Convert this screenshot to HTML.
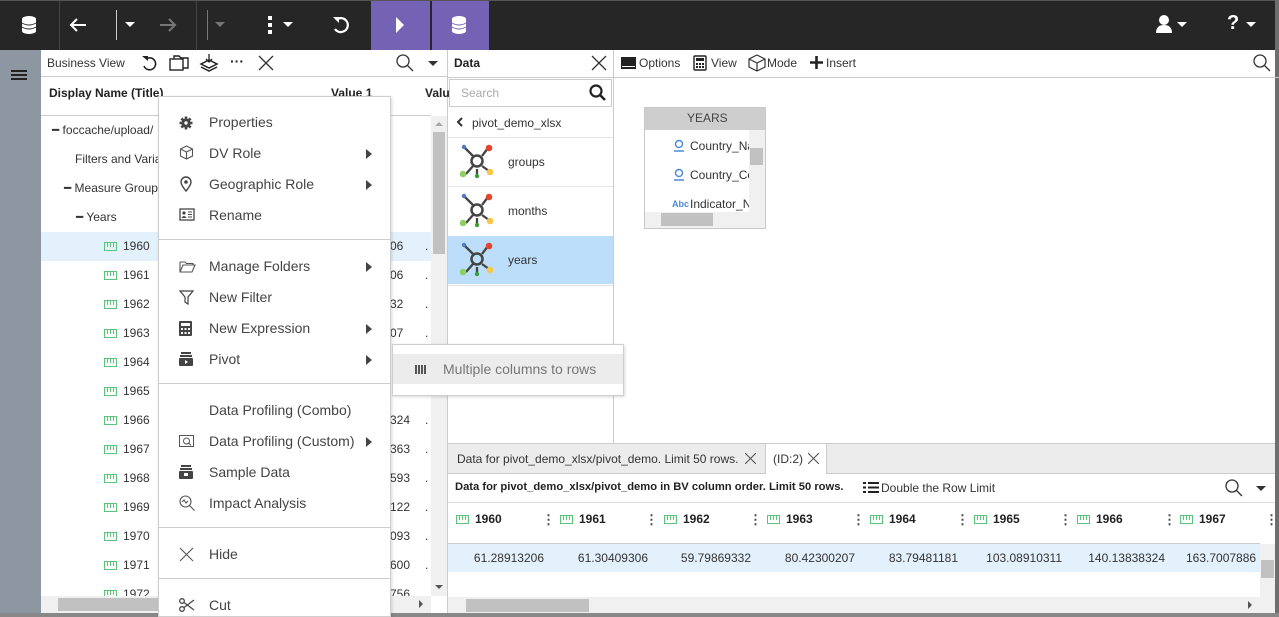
<!DOCTYPE html>
<html><head><meta charset="utf-8"><style>
*{box-sizing:border-box;margin:0;padding:0}
body{width:1279px;height:617px;overflow:hidden;background:#fff;font-family:"Liberation Sans",sans-serif;color:#333;position:relative;font-size:12px}
.a{position:absolute}
.t{position:absolute;white-space:nowrap}
.top{left:0;top:0;width:1279px;height:50px;background:#262626;border-top:1px solid #555}
.vs{position:absolute;top:1px;width:1px;height:49px;background:#444}
.mi{position:absolute;left:50px;font-size:14px;color:#444;white-space:nowrap}
.ic{position:absolute;left:20px}
.arr{position:absolute;left:207px;width:0;height:0;border-top:5px solid transparent;border-bottom:5px solid transparent;border-left:6px solid #444}
.sep{position:absolute;left:0;width:232px;height:1px;background:#ccc}
.tr{position:absolute;font-size:12px;color:#333;white-space:nowrap}
.meas{display:inline-block;width:13px;height:9px;border:1.5px solid #5cc47a;vertical-align:middle;margin-right:6px;background:repeating-linear-gradient(90deg,transparent 0 2px,#5cc47a 2px 3px) top/100% 4px no-repeat}
.gh{position:absolute;top:512px;font-weight:bold;font-size:12px;color:#222}
.gv{position:absolute;top:551px;font-size:12px;color:#333;text-align:right;width:90px}
.kb{position:absolute;top:512px;font-size:13px;color:#444;font-weight:bold}
</style></head><body>
<!-- top bar -->
<div class="a top"></div>
<div class="vs" style="left:59px"></div>
<div class="vs" style="left:196px"></div>
<div class="vs" style="left:400px"></div>
<div class="a" style="left:371px;top:1px;width:59px;height:49px;background:#7462b4"></div>
<div class="a" style="left:432px;top:1px;width:57px;height:49px;background:#7462b4"></div>
<svg class="a" style="left:20px;top:15px" width="18" height="20" viewBox="0 0 18 20"><ellipse cx="9" cy="4" rx="7" ry="3" fill="#fff"/><rect x="2" y="4" width="14" height="12" fill="#fff"/><ellipse cx="9" cy="16" rx="7" ry="3" fill="#fff"/><path d="M2 8q7 4 14 0M2 12q7 4 14 0" stroke="#262626" fill="none"/></svg>
<svg class="a" style="left:450px;top:15px" width="18" height="20" viewBox="0 0 18 20"><ellipse cx="9" cy="4" rx="7" ry="3" fill="#fff"/><rect x="2" y="4" width="14" height="12" fill="#fff"/><ellipse cx="9" cy="16" rx="7" ry="3" fill="#fff"/><path d="M2 8q7 4 14 0M2 12q7 4 14 0" stroke="#7462b4" fill="none"/></svg>
<svg class="a" style="left:69px;top:17px" width="18" height="16"><path d="M17 8H2M8 2L2 8l6 6" stroke="#fff" stroke-width="2" fill="none"/></svg>
<div class="a" style="left:116px;top:10px;width:1px;height:30px;background:#ccc"></div>
<div class="a" style="left:125px;top:22px;border-left:5px solid transparent;border-right:5px solid transparent;border-top:5px solid #fff"></div>
<svg class="a" style="left:159px;top:17px" width="18" height="16"><path d="M1 8h15M10 2l6 6-6 6" stroke="#777" stroke-width="2" fill="none"/></svg>
<div class="a" style="left:207px;top:10px;width:1px;height:30px;background:#777"></div>
<div class="a" style="left:215px;top:22px;border-left:5px solid transparent;border-right:5px solid transparent;border-top:5px solid #777"></div>
<div class="a" style="left:268px;top:16px;width:4px;height:4px;background:#fff"></div>
<div class="a" style="left:268px;top:23px;width:4px;height:4px;background:#fff"></div>
<div class="a" style="left:268px;top:30px;width:4px;height:4px;background:#fff"></div>
<div class="a" style="left:283px;top:22px;border-left:5px solid transparent;border-right:5px solid transparent;border-top:5px solid #fff"></div>
<svg class="a" style="left:331px;top:15px" width="20" height="20"><path d="M5 5A7 7 0 1 1 4 14" stroke="#fff" stroke-width="2.2" fill="none"/><path d="M2 2h6v6z" fill="#fff"/></svg>
<svg class="a" style="left:394px;top:16px" width="12" height="18"><path d="M2 1l8 8-8 8z" fill="#fff"/></svg>
<svg class="a" style="left:1155px;top:14px" width="18" height="20"><circle cx="9" cy="6" r="5" fill="#fff"/><path d="M1 19q0-8 8-8t8 8z" fill="#fff"/></svg>
<div class="a" style="left:1177px;top:22px;border-left:5px solid transparent;border-right:5px solid transparent;border-top:5px solid #fff"></div>
<div class="t" style="left:1227px;top:12px;font-size:20px;font-weight:bold;color:#fff">?</div>
<div class="a" style="left:1246px;top:22px;border-left:5px solid transparent;border-right:5px solid transparent;border-top:5px solid #fff"></div>
<div class="a" style="left:1275px;top:0;width:4px;height:617px;background:#6e6e6e"></div>
<div class="a" style="left:0;top:613px;width:1279px;height:4px;background:#888"></div>

<!-- left sidebar -->
<div class="a" style="left:0;top:50px;width:41px;height:563px;background:#8e96a1"></div>
<div class="a" style="left:11px;top:70px;width:16px;height:2px;background:#222"></div>
<div class="a" style="left:11px;top:74px;width:16px;height:2px;background:#222"></div>
<div class="a" style="left:11px;top:78px;width:16px;height:2px;background:#222"></div>

<!-- BV panel -->
<div class="a" style="left:41px;top:76px;width:406px;height:1px;background:#ccc"></div>
<div class="a" style="left:447px;top:50px;width:1px;height:563px;background:#ccc"></div>
<div class="t" style="left:47px;top:56px;font-size:12px;color:#333">Business View</div>
<svg class="a" style="left:141px;top:55px" width="17" height="17"><path d="M5 4A6 6 0 1 1 3 11" stroke="#222" stroke-width="1.6" fill="none"/><path d="M1 1h6v5z" fill="#222"/></svg>
<svg class="a" style="left:169px;top:54px" width="21" height="18"><rect x="1" y="5" width="13" height="11" stroke="#222" stroke-width="1.4" fill="#fff"/><path d="M5 5V2h5l2 2h7v10h-5" stroke="#222" stroke-width="1.4" fill="none"/></svg>
<svg class="a" style="left:199px;top:54px" width="20" height="18"><path d="M10 0v8M7 5l3 3 3-3" stroke="#222" stroke-width="1.3" fill="none"/><path d="M2 10l8-4 8 4-8 4z M2 13l8 4 8-4" stroke="#222" stroke-width="1.5" fill="none"/></svg>
<div class="t" style="left:230px;top:53px;font-size:14px;font-weight:bold;color:#222">···</div>
<svg class="a" style="left:258px;top:55px" width="16" height="16"><path d="M1 1l14 14M15 1L1 15" stroke="#333" stroke-width="1.3"/></svg>
<svg class="a" style="left:396px;top:54px" width="18" height="18"><circle cx="7" cy="7" r="6" stroke="#333" stroke-width="1.3" fill="none"/><path d="M11 11l6 6" stroke="#333" stroke-width="1.3"/></svg>
<div class="a" style="left:428px;top:61px;border-left:5px solid transparent;border-right:5px solid transparent;border-top:5px solid #333"></div>
<div class="t" style="left:49px;top:86px;font-weight:bold;font-size:12px;color:#222">Display Name (Title)</div>
<div class="t" style="left:331px;top:86px;font-weight:bold;font-size:12px;color:#222">Value 1</div>
<div class="t" style="left:425px;top:86px;font-weight:bold;font-size:12px;color:#222">Valu</div>
<div class="a" style="left:41px;top:115px;width:390px;height:1px;background:#ccc"></div>
<div class="a" style="left:41px;top:232px;width:390px;height:29px;background:#e3f1fc"></div>
<div class="tr" style="left:52px;top:123px">━ foccache/upload/</div>
<div class="tr" style="left:75px;top:152px">Filters and Varia</div>
<div class="tr" style="left:64px;top:181px">━ Measure Group</div>
<div class="tr" style="left:76px;top:210px">━ Years</div>
<div class="tr" style="left:104px;top:239px"><span class="meas"></span>1960</div>
<div class="tr" style="left:104px;top:268px"><span class="meas"></span>1961</div>
<div class="tr" style="left:104px;top:297px"><span class="meas"></span>1962</div>
<div class="tr" style="left:104px;top:326px"><span class="meas"></span>1963</div>
<div class="tr" style="left:104px;top:355px"><span class="meas"></span>1964</div>
<div class="tr" style="left:104px;top:384px"><span class="meas"></span>1965</div>
<div class="tr" style="left:104px;top:413px"><span class="meas"></span>1966</div>
<div class="tr" style="left:104px;top:442px"><span class="meas"></span>1967</div>
<div class="tr" style="left:104px;top:471px"><span class="meas"></span>1968</div>
<div class="tr" style="left:104px;top:500px"><span class="meas"></span>1969</div>
<div class="tr" style="left:104px;top:529px"><span class="meas"></span>1970</div>
<div class="tr" style="left:104px;top:558px"><span class="meas"></span>1971</div>
<div class="tr" style="left:104px;top:587px"><span class="meas"></span>1972</div>
<div class="tr" style="left:390px;top:239px">06</div><div class="tr" style="left:390px;top:268px">06</div><div class="tr" style="left:390px;top:297px">32</div><div class="tr" style="left:390px;top:326px">07</div>
<div class="tr" style="left:390px;top:413px">324</div><div class="tr" style="left:390px;top:442px">363</div><div class="tr" style="left:390px;top:471px">593</div><div class="tr" style="left:390px;top:500px">122</div><div class="tr" style="left:390px;top:529px">093</div><div class="tr" style="left:390px;top:558px">600</div><div class="tr" style="left:390px;top:587px">756</div>
<div class="tr" style="left:425px;top:239px">.</div><div class="tr" style="left:425px;top:268px">.</div><div class="tr" style="left:425px;top:297px">.</div><div class="tr" style="left:425px;top:326px">.</div><div class="tr" style="left:425px;top:413px">.</div><div class="tr" style="left:425px;top:442px">.</div><div class="tr" style="left:425px;top:471px">.</div><div class="tr" style="left:425px;top:500px">.</div><div class="tr" style="left:425px;top:529px">.</div><div class="tr" style="left:425px;top:558px">.</div>
<!-- scrollbars -->
<div class="a" style="left:431px;top:116px;width:16px;height:480px;background:#f0f0f0"></div>
<div class="a" style="left:433px;top:132px;width:12px;height:122px;background:#c1c1c1"></div>
<div class="a" style="left:435px;top:122px;border-left:4px solid transparent;border-right:4px solid transparent;border-bottom:4px solid #aaa"></div>
<div class="a" style="left:435px;top:585px;border-left:4px solid transparent;border-right:4px solid transparent;border-top:4px solid #555"></div>
<div class="a" style="left:41px;top:596px;width:390px;height:17px;background:#f0f0f0"></div>
<div class="a" style="left:58px;top:598px;width:110px;height:13px;background:#c1c1c1"></div>
<div class="a" style="left:419px;top:600px;border-top:4px solid transparent;border-bottom:4px solid transparent;border-left:4px solid #555"></div>

<!-- Data panel -->
<div class="t" style="left:454px;top:56px;font-weight:bold;font-size:12px;color:#222">Data</div>
<svg class="a" style="left:591px;top:55px" width="16" height="16"><path d="M1 1l14 14M15 1L1 15" stroke="#333" stroke-width="1.3"/></svg>
<div class="a" style="left:613px;top:50px;width:1px;height:393px;background:#ccc"></div>
<div class="a" style="left:448px;top:77px;width:831px;height:1px;background:#ccc"></div>
<div class="a" style="left:449px;top:79px;width:163px;height:28px;border:1px solid #ccc"></div>
<div class="t" style="left:461px;top:86px;font-size:12px;color:#aaa">Search</div>
<svg class="a" style="left:589px;top:84px" width="18" height="18"><circle cx="7" cy="7" r="5.5" stroke="#222" stroke-width="2.2" fill="none"/><path d="M11 11l5 5" stroke="#222" stroke-width="2.6"/></svg>
<svg class="a" style="left:456px;top:117px" width="8" height="10"><path d="M6 1L2 5l4 4" stroke="#333" stroke-width="2" fill="none"/></svg>
<div class="t" style="left:472px;top:116px;font-size:12px;color:#333">pivot_demo_xlsx</div>
<div class="a" style="left:448px;top:137px;width:165px;height:1px;background:#e5e5e5"></div>
<div class="a" style="left:448px;top:186px;width:165px;height:1px;background:#e5e5e5"></div>
<div class="a" style="left:448px;top:236px;width:165px;height:48px;background:#bcdefa"></div>
<div class="a" style="left:448px;top:285px;width:165px;height:1px;background:#e5e5e5"></div>
<svg class="a" style="left:459px;top:143px" width="38" height="38" viewBox="0 0 38 38"><g stroke="#444" stroke-width="2.3"><line x1="5" y1="4" x2="14" y2="13"/><line x1="29" y1="5" x2="23" y2="13"/><line x1="7" y1="31" x2="14" y2="23"/><line x1="18" y1="26" x2="18" y2="32"/><line x1="23" y1="23" x2="30" y2="28"/></g><circle cx="18" cy="18" r="5.5" fill="none" stroke="#444" stroke-width="2.5"/><circle cx="5" cy="4" r="2.2" fill="#4a7bc4"/><circle cx="30" cy="5" r="3.3" fill="#e0452e"/><circle cx="4" cy="31" r="3.3" fill="#8ed160"/><circle cx="18" cy="33" r="2.2" fill="#3e9d3a"/><circle cx="31" cy="29" r="3.3" fill="#f6c84a"/></svg>
<svg class="a" style="left:459px;top:192px" width="38" height="38" viewBox="0 0 38 38"><g stroke="#444" stroke-width="2.3"><line x1="5" y1="4" x2="14" y2="13"/><line x1="29" y1="5" x2="23" y2="13"/><line x1="7" y1="31" x2="14" y2="23"/><line x1="18" y1="26" x2="18" y2="32"/><line x1="23" y1="23" x2="30" y2="28"/></g><circle cx="18" cy="18" r="5.5" fill="none" stroke="#444" stroke-width="2.5"/><circle cx="5" cy="4" r="2.2" fill="#4a7bc4"/><circle cx="30" cy="5" r="3.3" fill="#e0452e"/><circle cx="4" cy="31" r="3.3" fill="#8ed160"/><circle cx="18" cy="33" r="2.2" fill="#3e9d3a"/><circle cx="31" cy="29" r="3.3" fill="#f6c84a"/></svg>
<svg class="a" style="left:459px;top:241px" width="38" height="38" viewBox="0 0 38 38"><g stroke="#444" stroke-width="2.3"><line x1="5" y1="4" x2="14" y2="13"/><line x1="29" y1="5" x2="23" y2="13"/><line x1="7" y1="31" x2="14" y2="23"/><line x1="18" y1="26" x2="18" y2="32"/><line x1="23" y1="23" x2="30" y2="28"/></g><circle cx="18" cy="18" r="5.5" fill="none" stroke="#444" stroke-width="2.5"/><circle cx="5" cy="4" r="2.2" fill="#4a7bc4"/><circle cx="30" cy="5" r="3.3" fill="#e0452e"/><circle cx="4" cy="31" r="3.3" fill="#8ed160"/><circle cx="18" cy="33" r="2.2" fill="#3e9d3a"/><circle cx="31" cy="29" r="3.3" fill="#f6c84a"/></svg>
<div class="t" style="left:508px;top:155px;font-size:12px;color:#333">groups</div>
<div class="t" style="left:508px;top:204px;font-size:12px;color:#333">months</div>
<div class="t" style="left:508px;top:253px;font-size:12px;color:#333">years</div>

<!-- right toolbar -->
<div class="a" style="left:621px;top:57px;width:15px;height:12px;background:#222;border-bottom:2px solid #222"></div>
<div class="a" style="left:622px;top:66px;width:13px;height:1px;background:#fff"></div>
<div class="t" style="left:639px;top:56px;font-size:12px;color:#333">Options</div>
<svg class="a" style="left:693px;top:55px" width="14" height="16"><rect x="1" y="1" width="12" height="14" rx="1" stroke="#222" stroke-width="1.4" fill="none"/><rect x="3" y="3" width="8" height="3" fill="#222"/><path d="M3 8h2v2H3zM6 8h2v2H6zM9 8h2v2H9zM3 11h2v2H3zM6 11h2v2H6zM9 11h2v2H9z" fill="#222"/></svg>
<div class="t" style="left:711px;top:56px;font-size:12px;color:#333">View</div>
<svg class="a" style="left:748px;top:54px" width="18" height="18"><path d="M9 1l8 4v8l-8 4-8-4V5z M1 5l8 4 8-4M9 9v8" stroke="#333" stroke-width="1.2" fill="none"/></svg>
<div class="t" style="left:767px;top:56px;font-size:12px;color:#333">Mode</div>
<svg class="a" style="left:810px;top:56px" width="13" height="13"><path d="M6.5 0v13M0 6.5h13" stroke="#222" stroke-width="2.6"/></svg>
<div class="t" style="left:826px;top:56px;font-size:12px;color:#333">Insert</div>
<svg class="a" style="left:1253px;top:54px" width="18" height="18"><circle cx="7" cy="7" r="6" stroke="#333" stroke-width="1.3" fill="none"/><path d="M11 11l6 6" stroke="#333" stroke-width="1.3"/></svg>

<!-- YEARS widget -->
<div class="a" style="left:644px;top:107px;width:122px;height:122px;border:1px solid #c8c8c8;background:#fff"></div>
<div class="a" style="left:645px;top:108px;width:120px;height:22px;background:#cecece"></div>
<div class="t" style="left:687px;top:111px;font-size:12px;color:#444">YEARS</div>
<div class="t" style="left:690px;top:139px;font-size:12px;color:#333">Country_Na</div>
<div class="t" style="left:690px;top:168px;font-size:12px;color:#333">Country_Co</div>
<div class="t" style="left:690px;top:197px;font-size:12px;color:#333">Indicator_N</div>
<div class="a" style="left:749px;top:130px;width:16px;height:82px;background:#f0f0f0"></div>
<div class="a" style="left:750px;top:148px;width:13px;height:17px;background:#c1c1c1"></div>
<div class="a" style="left:645px;top:212px;width:120px;height:16px;background:#f0f0f0"></div>
<div class="a" style="left:661px;top:213px;width:52px;height:13px;background:#c1c1c1"></div>
<svg class="a" style="left:673px;top:139px" width="12" height="13"><circle cx="6" cy="5" r="3.5" stroke="#4a8ad8" stroke-width="1.4" fill="none"/><path d="M1 12h10" stroke="#4a8ad8" stroke-width="1.5"/></svg>
<svg class="a" style="left:673px;top:168px" width="12" height="13"><circle cx="6" cy="5" r="3.5" stroke="#4a8ad8" stroke-width="1.4" fill="none"/><path d="M1 12h10" stroke="#4a8ad8" stroke-width="1.5"/></svg>
<div class="t" style="left:672px;top:199px;font-size:9px;font-weight:bold;color:#4a8ad8">Abc</div>

<!-- bottom panel -->
<div class="a" style="left:448px;top:443px;width:827px;height:31px;background:#ececec;border-top:1px solid #ccc;border-bottom:1px solid #ccc"></div>
<div class="a" style="left:765px;top:444px;width:62px;height:30px;background:#fff;border-left:1px solid #ccc;border-right:1px solid #ccc"></div>
<div class="t" style="left:457px;top:452px;font-size:12px;color:#333">Data for pivot_demo_xlsx/pivot_demo. Limit 50 rows.</div>
<svg class="a" style="left:745px;top:453px" width="11" height="11"><path d="M0 0l11 11M11 0L0 11" stroke="#555" stroke-width="1.1"/></svg>
<div class="t" style="left:773px;top:452px;font-size:12px;color:#333">(ID:2)</div>
<svg class="a" style="left:808px;top:453px" width="11" height="11"><path d="M0 0l11 11M11 0L0 11" stroke="#555" stroke-width="1.1"/></svg>
<div class="t" style="left:455px;top:481px;font-size:11.2px;font-weight:bold;color:#222">Data for pivot_demo_xlsx/pivot_demo in BV column order. Limit 50 rows.</div>
<svg class="a" style="left:863px;top:481px" width="16" height="13"><path d="M0 1h3v2H0zM0 5.5h3v2H0zM0 10h3v2H0zM5 1h11v2H5zM5 5.5h11v2H5zM5 10h11v2H5z" fill="#222"/></svg>
<div class="t" style="left:881px;top:481px;font-size:12px;color:#333">Double the Row Limit</div>
<svg class="a" style="left:1225px;top:479px" width="18" height="18"><circle cx="7" cy="7" r="6" stroke="#333" stroke-width="1.3" fill="none"/><path d="M11 11l6 6" stroke="#333" stroke-width="1.3"/></svg>
<div class="a" style="left:1256px;top:486px;border-left:5px solid transparent;border-right:5px solid transparent;border-top:5px solid #333"></div>
<div class="a" style="left:448px;top:502px;width:827px;height:1px;background:#ddd"></div>
<div class="a" style="left:448px;top:543px;width:812px;height:1px;background:#ccc"></div>
<div class="a" style="left:448px;top:544px;width:812px;height:28px;background:#e3f1fc"></div>

<div class="gh" style="left:456px"><span class="meas"></span>1960</div><div class="kb" style="left:542px">⋮</div>
<div class="gh" style="left:560px"><span class="meas"></span>1961</div><div class="kb" style="left:645px">⋮</div>
<div class="gh" style="left:664px"><span class="meas"></span>1962</div><div class="kb" style="left:749px">⋮</div>
<div class="gh" style="left:767px"><span class="meas"></span>1963</div><div class="kb" style="left:852px">⋮</div>
<div class="gh" style="left:870px"><span class="meas"></span>1964</div><div class="kb" style="left:956px">⋮</div>
<div class="gh" style="left:974px"><span class="meas"></span>1965</div><div class="kb" style="left:1059px">⋮</div>
<div class="gh" style="left:1077px"><span class="meas"></span>1966</div><div class="kb" style="left:1163px">⋮</div>
<div class="gh" style="left:1180px"><span class="meas"></span>1967</div><div class="kb" style="left:1265px">⋮</div>

<div class="gv" style="left:454px">61.28913206</div>
<div class="gv" style="left:558px">61.30409306</div>
<div class="gv" style="left:661px">59.79869332</div>
<div class="gv" style="left:765px">80.42300207</div>
<div class="gv" style="left:868px">83.79481181</div>
<div class="gv" style="left:972px">103.08910311</div>
<div class="gv" style="left:1075px">140.13838324</div>
<div class="t" style="left:1186px;top:551px;font-size:12px;color:#333">163.7007886</div>
<div class="a" style="left:1260px;top:544px;width:15px;height:53px;background:#f0f0f0"></div>
<div class="a" style="left:1261px;top:560px;width:13px;height:18px;background:#c1c1c1"></div>
<div class="a" style="left:448px;top:597px;width:827px;height:16px;background:#f0f0f0"></div>
<div class="a" style="left:466px;top:599px;width:123px;height:13px;background:#c1c1c1"></div>
<div class="a" style="left:1248px;top:601px;border-top:4px solid transparent;border-bottom:4px solid transparent;border-left:4px solid #555"></div>

<!-- context menu -->
<div class="a" style="left:158px;top:96px;width:233px;height:521px;background:#fff;border:1px solid #cfcfcf;box-shadow:1px 1px 3px rgba(0,0,0,.15)">
 <svg class="ic" style="top:19px" width="14" height="14" viewBox="0 0 14 14"><path d="M7 0.5v13M0.5 7h13M2.4 2.4l9.2 9.2M11.6 2.4l-9.2 9.2" stroke="#444" stroke-width="2.6"/><circle cx="7" cy="7" r="4.6" fill="#444"/><circle cx="7" cy="7" r="1.7" fill="#fff"/></svg>
 <div class="mi" style="top:17px">Properties</div>
 <svg class="ic" style="top:48px" width="15" height="15"><path d="M7.5 1l6 3v7l-6 3-6-3V4z M1.5 4l6 3 6-3M7.5 7v7" stroke="#555" stroke-width="1.1" fill="none"/></svg>
 <div class="mi" style="top:48px">DV Role</div><div class="arr" style="top:52px"></div>
 <svg class="ic" style="top:79px" width="14" height="16"><path d="M7 15S2 9 2 6a5 5 0 0 1 10 0c0 3-5 9-5 9z" stroke="#444" stroke-width="1.4" fill="none"/><circle cx="7" cy="6" r="1.8" fill="#444"/></svg>
 <div class="mi" style="top:79px">Geographic Role</div><div class="arr" style="top:83px"></div>
 <svg class="ic" style="top:111px" width="16" height="13"><rect x="1" y="1" width="14" height="11" stroke="#444" stroke-width="1.3" fill="none"/><circle cx="5" cy="5" r="1.6" fill="#444"/><path d="M2.5 10q2.5-4 5 0z" fill="#444"/><path d="M9 4h4M9 6.5h4M9 9h4" stroke="#444"/></svg>
 <div class="mi" style="top:110px">Rename</div>
 <div class="sep" style="top:142px"></div>
 <svg class="ic" style="top:163px" width="17" height="13"><path d="M1 2h5l1.5 1.5H14V5M1 2v10h12l3-7H4L1 12" stroke="#555" stroke-width="1.1" fill="none"/></svg>
 <div class="mi" style="top:161px">Manage Folders</div><div class="arr" style="top:165px"></div>
 <svg class="ic" style="top:193px" width="15" height="15"><path d="M1 1h13L9 7v7l-3-2V7z" stroke="#444" stroke-width="1.2" fill="none"/></svg>
 <div class="mi" style="top:192px">New Filter</div>
 <svg class="ic" style="top:224px" width="13" height="15"><rect x="0" y="0" width="13" height="15" rx="1" fill="#444"/><rect x="2" y="2" width="9" height="3" fill="#fff"/><path d="M2 7h2v2H2zM5.5 7h2v2h-2zM9 7h2v2H9zM2 11h2v2H2zM5.5 11h2v2h-2zM9 11h2v2H9z" fill="#fff"/></svg>
 <div class="mi" style="top:223px">New Expression</div><div class="arr" style="top:227px"></div>
 <svg class="ic" style="top:255px" width="14" height="14"><rect x="2" y="0" width="10" height="2" fill="#444"/><rect x="1" y="3" width="12" height="2" fill="#444"/><rect x="0" y="6" width="14" height="8" rx="1" fill="#444"/><path d="M6 8l3 2-3 2z" fill="#fff"/></svg>
 <div class="mi" style="top:254px">Pivot</div><div class="arr" style="top:258px"></div>
 <div class="sep" style="top:286px"></div>
 <div class="mi" style="top:305px">Data Profiling (Combo)</div>
 <svg class="ic" style="top:338px" width="15" height="12"><rect x="0.5" y="0.5" width="14" height="11" stroke="#555" fill="none"/><circle cx="7.5" cy="6" r="3" stroke="#555" fill="none"/><path d="M9.5 8l2.5 2.5" stroke="#555"/></svg>
 <div class="mi" style="top:336px">Data Profiling (Custom)</div><div class="arr" style="top:340px"></div>
 <svg class="ic" style="top:368px" width="14" height="14"><rect x="2" y="0" width="10" height="2" fill="#444"/><rect x="1" y="3" width="12" height="2" fill="#444"/><rect x="0" y="6" width="14" height="8" rx="1" fill="#444"/><rect x="5" y="8" width="4" height="3" fill="#fff"/></svg>
 <div class="mi" style="top:367px">Sample Data</div>
 <svg class="ic" style="top:398px" width="16" height="16"><circle cx="6.5" cy="6.5" r="5.5" stroke="#555" stroke-width="1.1" fill="none"/><path d="M10.5 10.5l5 5M3 7l2-2 2 3 2-2" stroke="#555" stroke-width="1.1" fill="none"/></svg>
 <div class="mi" style="top:398px">Impact Analysis</div>
 <div class="sep" style="top:430px"></div>
 <svg class="ic" style="top:450px" width="15" height="15"><path d="M1 1l13 13M14 1L1 14" stroke="#555" stroke-width="1.1"/></svg>
 <div class="mi" style="top:449px">Hide</div>
 <div class="sep" style="top:481px"></div>
 <svg class="ic" style="top:501px" width="16" height="14"><circle cx="3" cy="3" r="2.3" stroke="#444" stroke-width="1.3" fill="none"/><circle cx="3" cy="11" r="2.3" stroke="#444" stroke-width="1.3" fill="none"/><path d="M5 4.5L15 12M5 9.5L15 2" stroke="#444" stroke-width="1.2"/></svg>
 <div class="mi" style="top:500px">Cut</div>
</div>

<!-- submenu -->
<div class="a" style="left:392px;top:344px;width:232px;height:52px;background:#fff;border:1px solid #cfcfcf;box-shadow:1px 1px 3px rgba(0,0,0,.15)"></div>
<div class="a" style="left:393px;top:354px;width:230px;height:30px;background:#ececec"></div>
<svg class="a" style="left:415px;top:365px" width="11" height="9"><path d="M0 0h2v9H0zM3 0h2v9H3zM6 0h2v9H6zM9 0h2v9H9z" fill="#555"/></svg>
<div class="t" style="left:443px;top:361px;font-size:14px;color:#777">Multiple columns to rows</div>
</body></html>
